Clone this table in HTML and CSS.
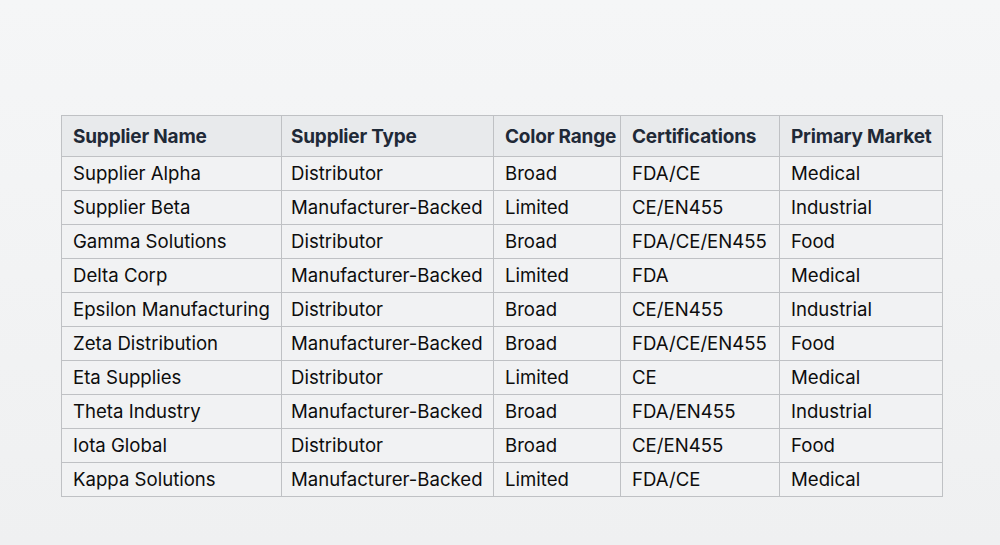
FILE: index.html
```html
<!DOCTYPE html>
<html>
<head>
<meta charset="utf-8">
<link rel="stylesheet" href="styles.css">
</head>
<body>
<main class="page">
<table class="grid">
<colgroup>
<col class="c1"><col class="c2"><col class="c3"><col class="c4"><col class="c5">
</colgroup>
<thead>
<tr><th>Supplier Name</th><th>Supplier Type</th><th>Color Range</th><th>Certifications</th><th>Primary Market</th></tr>
</thead>
<tbody>
<tr><td>Supplier Alpha</td><td>Distributor</td><td>Broad</td><td>FDA/CE</td><td>Medical</td></tr>
<tr><td>Supplier Beta</td><td>Manufacturer-Backed</td><td>Limited</td><td>CE/EN455</td><td>Industrial</td></tr>
<tr><td>Gamma Solutions</td><td>Distributor</td><td>Broad</td><td>FDA/CE/EN455</td><td>Food</td></tr>
<tr><td>Delta Corp</td><td>Manufacturer-Backed</td><td>Limited</td><td>FDA</td><td>Medical</td></tr>
<tr><td>Epsilon Manufacturing</td><td>Distributor</td><td>Broad</td><td>CE/EN455</td><td>Industrial</td></tr>
<tr><td>Zeta Distribution</td><td>Manufacturer-Backed</td><td>Broad</td><td>FDA/CE/EN455</td><td>Food</td></tr>
<tr><td>Eta Supplies</td><td>Distributor</td><td>Limited</td><td>CE</td><td>Medical</td></tr>
<tr><td>Theta Industry</td><td>Manufacturer-Backed</td><td>Broad</td><td>FDA/EN455</td><td>Industrial</td></tr>
<tr><td>Iota Global</td><td>Distributor</td><td>Broad</td><td>CE/EN455</td><td>Food</td></tr>
<tr><td>Kappa Solutions</td><td>Manufacturer-Backed</td><td>Limited</td><td>FDA/CE</td><td>Medical</td></tr>
</tbody>
</table>
</main>
</body>
</html>
```
FILE: styles.css
```css
html, body {
  margin: 0;
  padding: 0;
}
body {
  width: 1000px;
  height: 545px;
  background: linear-gradient(180deg, #f5f6f7 0%, #eff0f1 100%);
  font-family: Inter, "Noto Sans", sans-serif;
  overflow: hidden;
}
.page {
  padding: 115px 0 0 61px;
}
.grid {
  border-collapse: collapse;
  table-layout: fixed;
  width: 881px;
  background: #f1f2f3;
}
.c1 { width: 220px; }
.c2 { width: 212px; }
.c3 { width: 127px; }
.c4 { width: 159px; }
.c5 { width: 163px; }
.grid th, .grid td {
  border: 1px solid #bfc1c4;
  text-align: left;
  padding: 0 11px;
  white-space: nowrap;
}
.grid th:nth-child(2), .grid td:nth-child(2) {
  padding-left: 9px;
}
.grid th {
  height: 40px;
  font-size: 19px;
  font-weight: 700;
  color: #1f2937;
  background: #e8eaec;
  letter-spacing: -0.2px;
}
.grid td {
  height: 32px;
  padding-bottom: 1px;
  font-size: 18.6px;
  color: #0d0d0d;
}
```
